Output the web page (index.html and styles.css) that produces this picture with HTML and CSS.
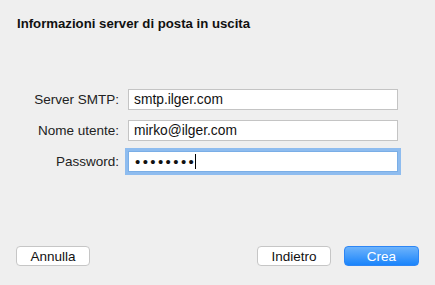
FILE: index.html
```html
<!DOCTYPE html>
<html lang="it">
<head>
    <meta charset="UTF-8">
    <title>Informazioni server di posta in uscita</title>
    <link rel="stylesheet" href="styles.css">
</head>
<body>
    <div class="sheet">
        <h2 class="title">Informazioni server di posta in uscita</h2>
        <div class="form">
            <label for="smtp">Server SMTP:</label>
            <input type="text" id="smtp" value="smtp.ilger.com">
            <label for="user">Nome utente:</label>
            <input type="text" id="user" value="mirko@ilger.com">
            <label>Password:</label>
            <div class="field focused"><span class="dots">••••••••</span><span class="caret"></span></div>
        </div>
        <div class="footer">
            <button class="btn">Annulla</button>
            <div class="spacer"></div>
            <button class="btn">Indietro</button>
            <button class="btn primary">Crea</button>
        </div>
    </div>
</body>
</html>
```

FILE: styles.css
```css
body {
    margin: 0;
    font-family: "Liberation Sans", Arial, sans-serif;
    background: #efefef;
    color: #1a1a1a;
}
.sheet {
    height: 285px;
    box-sizing: border-box;
    padding: 16px 16px 19px 16px;
    display: flex;
    flex-direction: column;
}
.title {
    margin: 0 0 0 1px;
    font-size: 13.2px;
    line-height: 16px;
    font-weight: bold;
    color: #111;
}
.form {
    margin-top: 57px;
    display: grid;
    grid-template-columns: 103px 270px;
    column-gap: 9px;
    row-gap: 10px;
    align-items: center;
}
.form label {
    text-align: right;
    font-size: 13.5px;
    color: #222;
}
.form input, .field {
    box-sizing: border-box;
    height: 21px;
    margin: 0;
    padding: 0 5px;
    border: 1px solid #c4c4c4;
    background: #fff;
    font-family: "Liberation Sans", Arial, sans-serif;
    font-size: 13.8px;
    color: #111;
    outline: none;
}
.field {
    display: flex;
    align-items: center;
}
.focused {
    box-shadow: 0 0 0 3px #8ebcef;
    border-color: #7aaee6;
}
.dots {
    font-size: 15px;
    letter-spacing: 2.4px;
    margin-left: 1px;
}
.caret {
    width: 1px;
    height: 15px;
    background: #000;
    margin-left: -1px;
}
.footer {
    margin-top: auto;
    display: flex;
    gap: 13px;
}
.spacer {
    flex: 1;
}
.btn {
    width: 74px;
    height: 20px;
    padding: 0;
    border: 1px solid #c6c6c6;
    border-radius: 4px;
    background: #fff;
    font-family: "Liberation Sans", Arial, sans-serif;
    font-size: 13.5px;
    color: #111;
}
.primary {
    width: 75px;
    border-color: #2d86f5;
    background: linear-gradient(#6db3fb, #1a84fb);
    color: #fff;
}
```
